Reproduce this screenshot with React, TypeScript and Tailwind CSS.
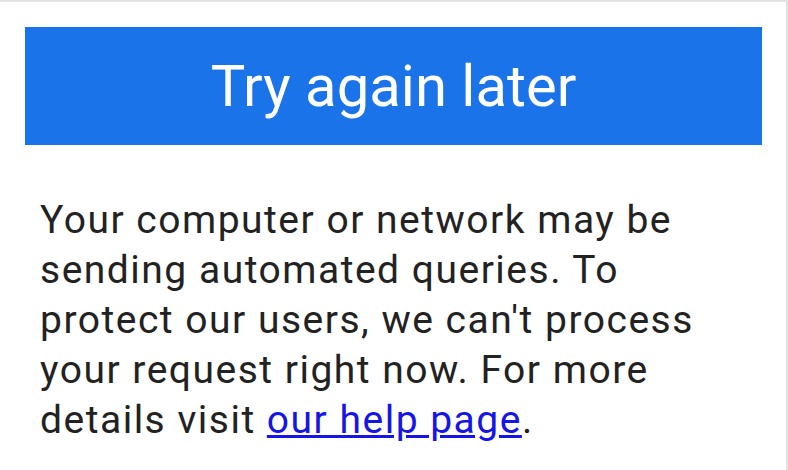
export default function App() {
  return (
    <div className="w-[788px] h-[470px] bg-white border-t-2 border-r-2 border-[#e2e2e2] overflow-hidden" style={{ fontFamily: "Roboto, Arial, sans-serif" }}>
      <div className="pt-[25px] pl-[25px] pr-[24px]">
        <div className="h-[118px] bg-[#1a73e8] flex items-center justify-center text-white text-[58px] leading-none">
          Try again later
        </div>
        <p className="mt-[50px] pl-[15px] pr-[62px] text-[39px] leading-[50px] tracking-[1.5px] text-[#222]">
          Your computer or network may be sending automated queries. To protect our users, we can't process your request right now. For more details visit{" "}
          <a href="#" className="text-[#1515e6] underline">our help page</a>.
        </p>
      </div>
    </div>
  );
}
